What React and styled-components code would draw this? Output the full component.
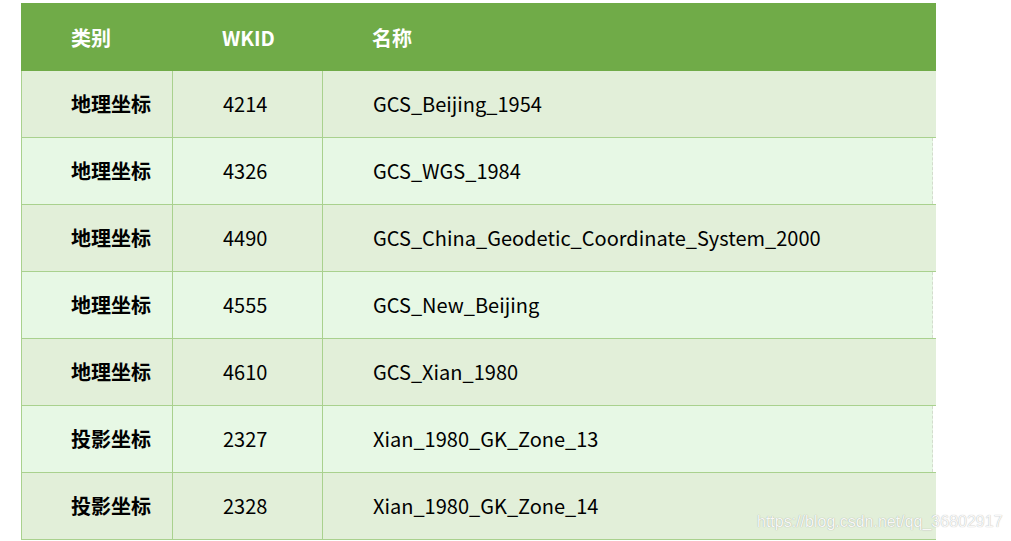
import React from "react";
import styled, { createGlobalStyle } from "styled-components";

const Global = createGlobalStyle`
  html, body { margin: 0; padding: 0; background: #fff; }
  body { font-family: "Noto Sans CJK SC", "Noto Sans", sans-serif; }
`;

const Page = styled.div`
  position: relative;
  width: 1011px;
  height: 541px;
  overflow: hidden;
  padding: 3px 0 0 21px;
  box-sizing: border-box;
`;

const Table = styled.div`
  width: 915px;
  display: flex;
  flex-direction: column;
`;

const HeadRow = styled.div`
  display: grid;
  grid-template-columns: 151px 150px 1fr;
  height: 68px;
  background: #70ab48;
  align-items: center;
`;

const HeadCell = styled.div`
  padding-left: 50px;
  color: #fff;
  font-weight: 700;
  font-size: 20px;
  line-height: 1;
  padding-top: 1px;
`;

const Row = styled.div`
  display: grid;
  grid-template-columns: 151px 150px 1fr;
  height: 67px;
  box-sizing: border-box;
  border-bottom: 1px solid #a9d18e;
  border-left: 1px solid #a9d18e;
  background: ${(p) => (p.$alt ? "linear-gradient(to right, #e7f8e5 calc(100% - 3px), #fff calc(100% - 3px))" : "#e2efd9")};
`;

const Cell = styled.div`
  display: flex;
  align-items: center;
  padding-left: ${(p) => (p.$first ? "49px" : "50px")};
  border-right: ${(p) => (p.$last ? "none" : "1px solid #a9d18e")};
  font-size: 20px;
  color: #000;
  font-weight: ${(p) => (p.$bold ? 700 : 400)};
  white-space: nowrap;
  padding-bottom: 1px;
  ${(p) =>
    p.$dash
      ? `margin-right: 3px; border-right: 1px dashed #d3dccd;`
      : ""}
`;

const Watermark = styled.div`
  position: absolute;
  left: 757px;
  top: 513px;
  font-family: "Liberation Sans", Arial, sans-serif;
  font-size: 16px;
  color: #f8f8f8;
  text-shadow: 0 0 1px rgba(0, 0, 0, 0.35);
  white-space: nowrap;
`;

const rows = [
  ["地理坐标", "4214", "GCS_Beijing_1954"],
  ["地理坐标", "4326", "GCS_WGS_1984"],
  ["地理坐标", "4490", "GCS_China_Geodetic_Coordinate_System_2000"],
  ["地理坐标", "4555", "GCS_New_Beijing"],
  ["地理坐标", "4610", "GCS_Xian_1980"],
  ["投影坐标", "2327", "Xian_1980_GK_Zone_13"],
  ["投影坐标", "2328", "Xian_1980_GK_Zone_14"],
];

export default function App() {
  return (
    <Page>
      <Global />
      <Table>
        <HeadRow>
          <HeadCell>类别</HeadCell>
          <HeadCell>WKID</HeadCell>
          <HeadCell>名称</HeadCell>
        </HeadRow>
        {rows.map((r, i) => (
          <Row key={i} $alt={i % 2 === 1}>
            <Cell $first $bold>{r[0]}</Cell>
            <Cell>{r[1]}</Cell>
            <Cell $last $dash={i % 2 === 1}>{r[2]}</Cell>
          </Row>
        ))}
      </Table>
      <Watermark>https://blog.csdn.net/qq_36802917</Watermark>
    </Page>
  );
}
